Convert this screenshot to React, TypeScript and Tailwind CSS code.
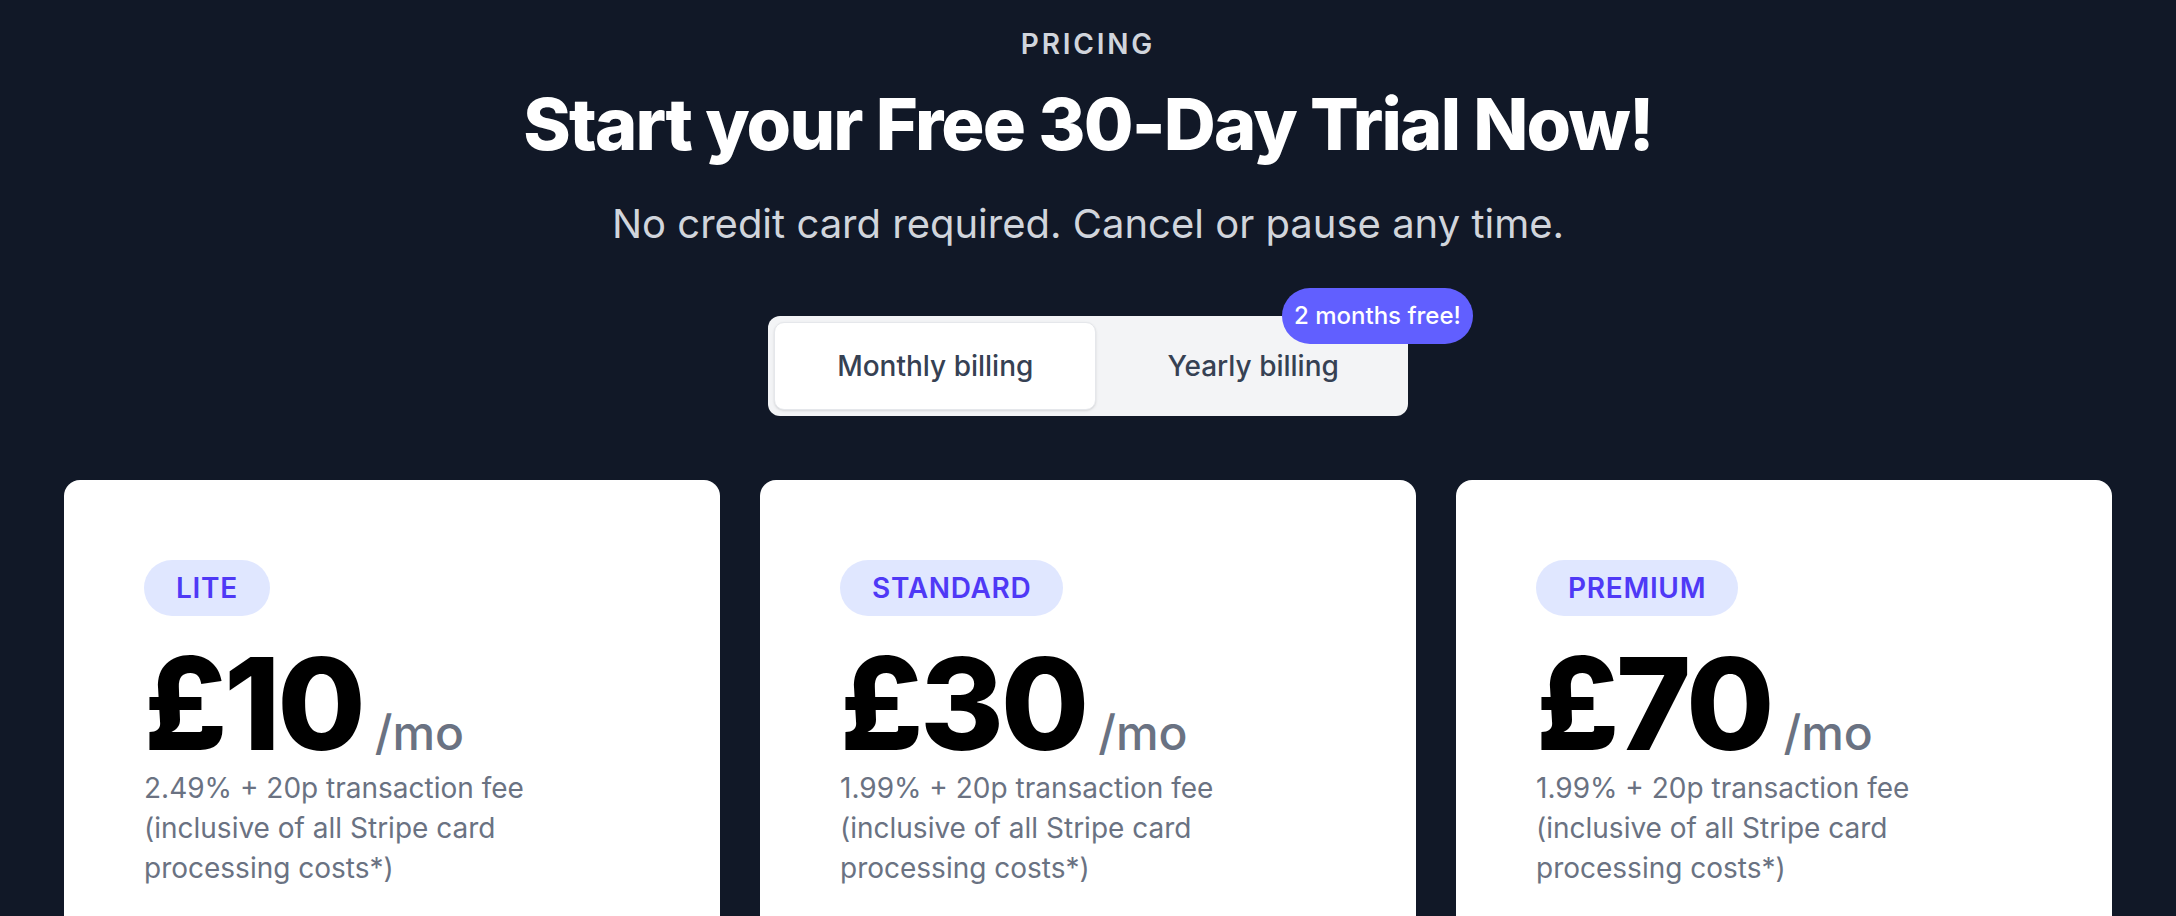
const plans = [
  { name: 'LITE', price: '£10', fee: '2.49% + 20p transaction fee' },
  { name: 'STANDARD', price: '£30', fee: '1.99% + 20p transaction fee' },
  { name: 'PREMIUM', price: '£70', fee: '1.99% + 20p transaction fee' },
];

function PlanCard({ name, price, fee }: { name: string; price: string; fee: string }) {
  return (
    <div className="min-h-[560px] rounded-2xl bg-white p-20">
      <span className="inline-block rounded-full bg-indigo-100 px-8 py-2 text-[28px] leading-[40px] font-semibold tracking-wide text-indigo-600">
        {name}
      </span>
      <div className="mt-6 flex items-baseline">
        <span className="text-[128px] leading-none font-extrabold tracking-tight text-black">{price}</span>
        <span className="ml-3 text-[48px] leading-[64px] font-medium text-gray-500">/mo</span>
      </div>
      <p className="max-w-[384px] text-[28px] leading-[40px] text-gray-500">
        {fee}
        <br />
        (inclusive of all Stripe card processing costs*)
      </p>
    </div>
  );
}

export default function App() {
  return (
    <div className="min-h-screen bg-[#111827] px-16 pt-6 pb-16 font-['Inter',sans-serif]">
      <div className="text-center">
        <p className="text-[28px] leading-[40px] font-semibold tracking-widest text-gray-300">PRICING</p>
        <h1 className="mt-5 text-[72px] leading-[80px] font-extrabold tracking-tight text-white">
          Start your Free 30-Day Trial Now!
        </h1>
        <p className="mt-8 text-[40px] leading-[56px] text-gray-300">
          No credit card required. Cancel or pause any time.
        </p>
      </div>

      <div className="mt-16 flex justify-center">
        <div className="relative flex gap-2 rounded-xl bg-gray-100 p-1.5">
          <button className="rounded-[10px] border border-gray-200 bg-white px-[62px] py-[23px] text-[28px] leading-[40px] font-medium text-gray-700 shadow-sm">
            Monthly billing
          </button>
          <button className="rounded-[10px] border border-transparent px-[62px] py-[23px] text-[28px] leading-[40px] font-medium text-gray-700">
            Yearly billing
          </button>
          <span className="absolute -top-[28px] -right-[65px] rounded-full bg-indigo-500 px-3 py-3 text-[24px] leading-[32px] font-medium text-white">
            2 months free!
          </span>
        </div>
      </div>

      <div className="mt-16 grid grid-cols-3 gap-10">
        {plans.map((p) => (
          <PlanCard key={p.name} {...p} />
        ))}
      </div>
    </div>
  );
}
